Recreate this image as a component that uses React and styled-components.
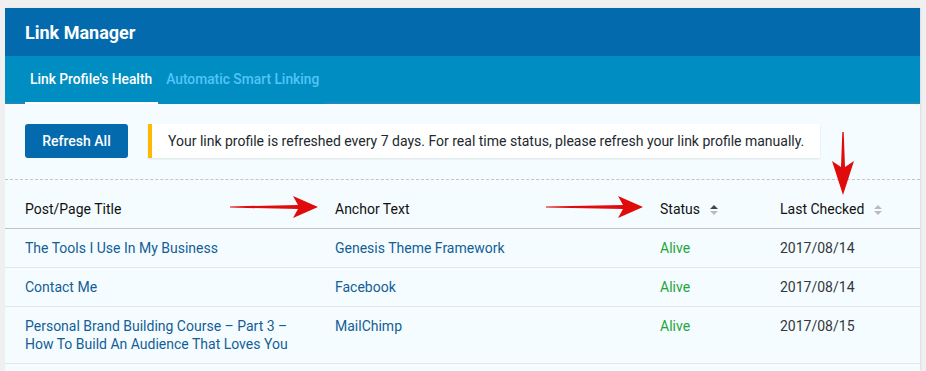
import React from 'react';
import styled, { createGlobalStyle } from 'styled-components';

const GlobalStyle = createGlobalStyle`
  html, body {
    margin: 0;
    padding: 0;
    background: #f0f0f0;
    overflow: hidden;
  }
  body {
    font-family: Roboto, "Liberation Sans", Arial, sans-serif;
    font-size: 14px;
    color: #23282d;
  }
`;

const Page = styled.div`
  padding: 8px 6px 0 5px;
  height: 371px;
  box-sizing: border-box;
`;

const Panel = styled.div`
  position: relative;
  width: 915px;
  height: 100%;
  background: #f5fcff;
  box-shadow: 1px 0 2px rgba(0, 0, 0, 0.08);
`;

const TitleBar = styled.header`
  height: 48px;
  display: flex;
  align-items: center;
  padding: 0 20px;
  background: #026aad;
`;

const Title = styled.h1`
  margin: 0;
  font-size: 18px;
  font-weight: 700;
  color: #fff;
`;

const TabBar = styled.nav`
  height: 46px;
  display: flex;
  padding: 0 20px;
  gap: 3px;
  background: #008ec2;
  border-bottom: 2px solid #1d89b8;
`;

const Tab = styled.div`
  display: flex;
  align-items: center;
  padding: 0 6px 0 5px;
  margin-bottom: -2px;
  font-size: 13.8px;
  font-weight: 500;
  color: ${(p) => (p.$active ? '#fff' : '#52c5f7')};
  border-bottom: 2px solid ${(p) => (p.$active ? '#fff' : '#008ec2')};
`;

const Toolbar = styled.div`
  display: flex;
  align-items: stretch;
  gap: 20px;
  padding: 20px 20px 21px;
  border-bottom: 1px dashed #c4c4c4;
`;

const Button = styled.button`
  height: 34px;
  width: 103px;
  border: none;
  border-radius: 3px;
  background: #026aad;
  color: #fff;
  font-family: inherit;
  font-size: 14px;
  font-weight: 500;
  padding: 0;
`;

const Notice = styled.div`
  display: flex;
  align-items: center;
  height: 34px;
  box-sizing: border-box;
  padding: 0 16px;
  background: #fff;
  border-left: 4px solid #ffb900;
  box-shadow: 0 1px 2px rgba(0, 0, 0, 0.1);
  font-size: 14px;
  color: #23282d;
`;

const Row = styled.div`
  display: grid;
  grid-template-columns: 310px 325px 120px 1fr;
  padding: ${(p) => (p.$head ? '20px 20px 10px' : '10px 20px')};
  line-height: 18px;
  white-space: ${(p) => (p.$head ? 'nowrap' : 'normal')};
  border-bottom: 1px solid ${(p) => (p.$head ? '#c3c3c3' : '#e4e6e8')};
  color: ${(p) => (p.$head ? '#111' : '#32373c')};
`;

const Cell = styled.div`
  padding-right: 20px;
  display: flex;
  align-items: flex-start;
  color: ${(p) => p.$color || 'inherit'};
`;

const SortIcon = styled.span`
  display: inline-flex;
  flex-direction: column;
  gap: 2px;
  margin-left: 10px;
  margin-top: 5px;

  &::before,
  &::after {
    content: '';
    width: 0;
    height: 0;
    border-left: 4px solid transparent;
    border-right: 4px solid transparent;
  }
  &::before {
    border-bottom: 4px solid ${(p) => (p.$active ? '#444' : '#bbb')};
  }
  &::after {
    border-top: 4px solid #bbb;
  }
`;

const ArrowBox = styled.svg`
  position: absolute;
  left: ${(p) => p.$x}px;
  top: ${(p) => p.$y}px;
`;

const LINK = '#135e96';
const GREEN = '#1ea53a';

const rows = [
  { title: 'The Tools I Use In My Business', anchor: 'Genesis Theme Framework', date: '2017/08/14' },
  { title: 'Contact Me', anchor: 'Facebook', date: '2017/08/14' },
  {
    title: 'Personal Brand Building Course – Part 3 – How To Build An Audience That Loves You',
    anchor: 'MailChimp',
    date: '2017/08/15',
  },
];

function HArrow({ x, y, length }) {
  const w = length;
  const d = `M0 11.4 L${w - 20} 10 L${w - 25} 1 L${w} 12 L${w - 25} 23 L${w - 20} 14 L0 12.6 Z`;
  return (
    <ArrowBox $x={x} $y={y} width={w} height={24} viewBox={`0 0 ${w} 24`}>
      <path d={d} fill="#e00b0b" />
    </ArrowBox>
  );
}

function VArrow({ x, y, length }) {
  const h = length;
  const d = `M11.3 0 L10 ${h - 28} L1 ${h - 34} L12 ${h} L23 ${h - 34} L14 ${h - 28} L12.7 0 Z`;
  return (
    <ArrowBox $x={x} $y={y} width={24} height={h} viewBox={`0 0 24 ${h}`}>
      <path d={d} fill="#e00b0b" />
    </ArrowBox>
  );
}

export default function App() {
  return (
    <Page>
      <GlobalStyle />
      <Panel>
        <TitleBar>
          <Title>Link Manager</Title>
        </TitleBar>
        <TabBar>
          <Tab $active>Link Profile's Health</Tab>
          <Tab>Automatic Smart Linking</Tab>
        </TabBar>
        <Toolbar>
          <Button>Refresh All</Button>
          <Notice>
            Your link profile is refreshed every 7 days. For real time status, please refresh your link profile manually.
          </Notice>
        </Toolbar>
        <Row $head>
          <Cell>Post/Page Title</Cell>
          <Cell>Anchor Text</Cell>
          <Cell>
            Status <SortIcon $active />
          </Cell>
          <Cell>
            Last Checked <SortIcon />
          </Cell>
        </Row>
        {rows.map((r) => (
          <Row key={r.title}>
            <Cell $color={LINK}>{r.title}</Cell>
            <Cell $color={LINK}>{r.anchor}</Cell>
            <Cell $color={GREEN}>Alive</Cell>
            <Cell>{r.date}</Cell>
          </Row>
        ))}
        <HArrow x={225} y={187} length={88} />
        <HArrow x={541} y={187} length={97} />
        <VArrow x={826} y={124} length={63} />
      </Panel>
    </Page>
  );
}
